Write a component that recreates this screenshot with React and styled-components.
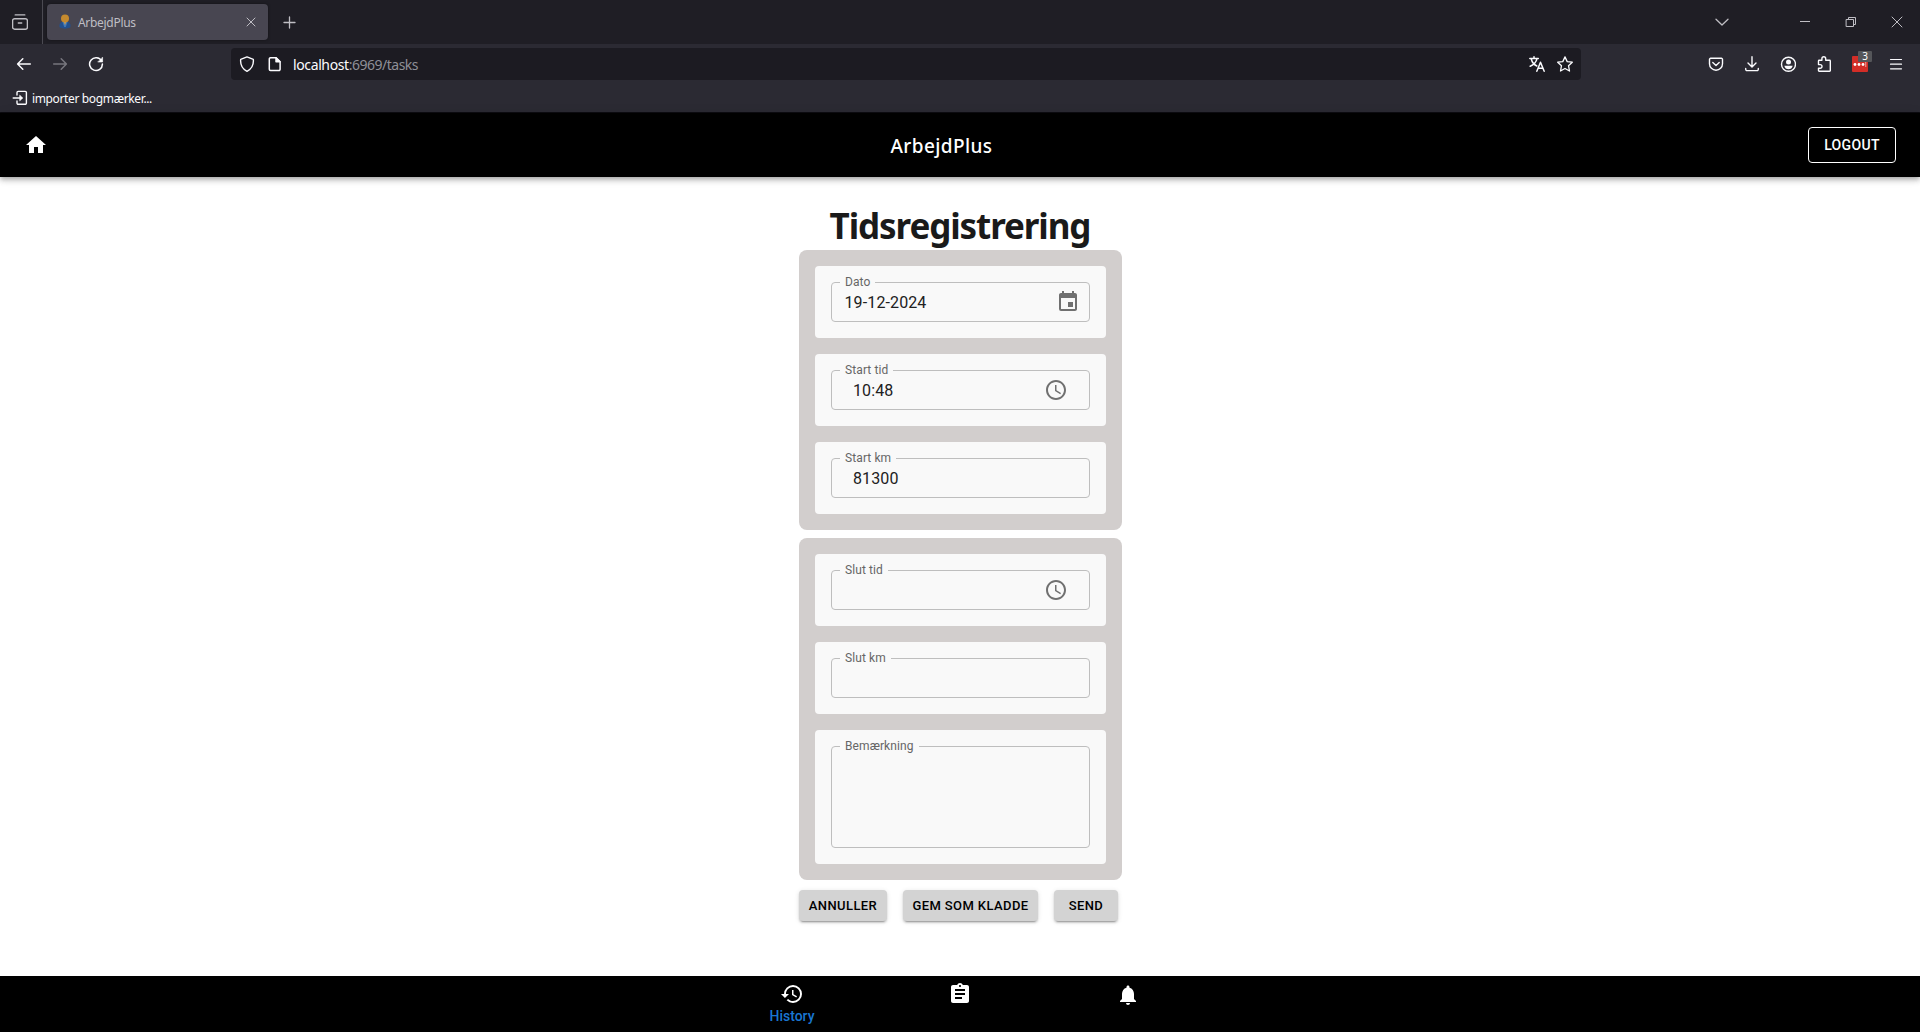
import React from "react";
import styled, { createGlobalStyle } from "styled-components";
import {
  MdHome,
  MdRestore,
  MdAssignment,
  MdNotifications,
  MdEvent,
  MdAccessTime,
} from "react-icons/md";

const GlobalStyle = createGlobalStyle`
  * { box-sizing: border-box; }
  body { margin: 0; background: #fff; font-family: Roboto, "Liberation Sans", sans-serif; }
  svg { display: block; flex: none; }
`;

const Window = styled.div`
  display: flex;
  flex-direction: column;
  height: 1032px;
  overflow: hidden;
`;

/* ---------- browser chrome ---------- */

const Chrome = styled.header`
  flex: none;
  height: 113px;
  background: #2b2a33;
  border-bottom: 1px solid #0e0d12;
  color: #fbfbfe;
  font-family: "Noto Sans", "Open Sans", sans-serif;
`;

const TabStrip = styled.div`
  display: flex;
  align-items: center;
  height: 44px;
  background: #1f1e25;
  color: #bfbec4;
`;

const RecentView = styled.div`
  display: flex;
  align-items: center;
  width: 43px;
  height: 44px;
  padding-left: 12px;
  border-right: 1px solid #4b4a52;
`;

const Tab = styled.div`
  display: flex;
  align-items: center;
  width: 221px;
  height: 36px;
  margin: 0 14px 0 4px;
  padding: 0 9px 0 10px;
  border-radius: 4px;
  background: #484651;
  box-shadow: 0 0 3px rgba(0, 0, 0, 0.4);
  font-size: 12px;
  letter-spacing: -0.3px;
`;

const TabTitle = styled.span`
  flex: 1;
  margin-left: 5px;
  line-height: 16px;
  padding-top: 2px;
`;

const WindowControls = styled.div`
  display: flex;
  align-items: center;
  margin-left: auto;
  padding-right: 15px;
  gap: 30px;
`;

const TabList = styled.div`
  margin-right: 37px;
`;

const NavBar = styled.div`
  display: flex;
  align-items: center;
  height: 40px;
  padding: 0 16px;
`;

const NavGroup = styled.div`
  display: flex;
  align-items: center;
  gap: 20px;
  width: 215px;
`;

const UrlBar = styled.div`
  display: flex;
  align-items: center;
  width: 1350px;
  height: 32px;
  padding: 0 8px;
  border-radius: 4px;
  background: #1c1b22;
`;

const UrlIcon = styled.span`
  margin-right: ${(p) => p.$gap}px;
`;

const Url = styled.span`
  flex: 1;
  font-size: 14px;
  letter-spacing: -0.38px;
  line-height: 20px;
  padding-top: 2px;
  color: #fbfbfe;
`;

const UrlPath = styled.span`
  color: #8f8f97;
  letter-spacing: -0.5px;
`;

const Actions = styled.div`
  display: flex;
  align-items: center;
  gap: 20px;
  margin-left: auto;
`;

const Extension = styled.div`
  position: relative;
  display: flex;
  align-items: center;
  justify-content: center;
  gap: 1px;
  width: 16px;
  height: 16px;
  border-radius: 1px;
  background: #d32d27;
`;

const ExtensionBadge = styled.span`
  position: absolute;
  top: -5px;
  left: 6px;
  width: 14px;
  height: 11px;
  border-radius: 1px;
  background: #55565a;
  color: #fff;
  font-size: 10px;
  line-height: 11px;
  text-align: center;
`;

const Bookmarks = styled.div`
  display: flex;
  align-items: center;
  gap: 4px;
  height: 28px;
  padding: 0 0 0 12px;
  font-size: 12px;
  letter-spacing: -0.36px;
`;

const BookmarkLabel = styled.span`
  padding-top: 1px;
`;

/* ---------- application ---------- */

const AppBar = styled.div`
  position: relative;
  flex: none;
  display: flex;
  align-items: center;
  height: 64px;
  padding: 0 24px;
  background: #000;
  color: #fff;
  box-shadow: 0 2px 4px -1px rgba(0, 0, 0, 0.2), 0 4px 5px rgba(0, 0, 0, 0.14),
    0 1px 10px rgba(0, 0, 0, 0.12);
`;

const Brand = styled.span`
  flex: 1;
  text-align: center;
  font-family: "Noto Sans", "Open Sans", sans-serif;
  font-size: 19px;
  font-weight: 500;
  letter-spacing: 0.4px;
  line-height: 32px;
  padding: 2px 0 0 27px;
`;

const LogoutButton = styled.button`
  width: 88px;
  height: 36px;
  padding: 0;
  border: 1px solid #fff;
  border-radius: 4px;
  background: transparent;
  color: #fff;
  font: 500 14px/24px Roboto, sans-serif;
  letter-spacing: 0.35px;
`;

const Main = styled.main`
  flex: 1;
  display: flex;
  flex-direction: column;
  width: 323px;
  margin-left: 799px;
`;

const Title = styled.h1`
  align-self: center;
  margin: 25px 0 0 -1px;
  height: 48px;
  font: 700 35px/48px "Noto Sans", "Open Sans", sans-serif;
  letter-spacing: -1.1px;
  white-space: nowrap;
  color: #1a1a1a;
`;

const Group = styled.section`
  display: flex;
  flex-direction: column;
  gap: 16px;
  margin-bottom: 8px;
  padding: 16px;
  border-radius: 8px;
  background: #d2cecd;
`;

const Card = styled.div`
  padding: 16px;
  border-radius: 4px;
  background: #f9f9f9;
`;

const Fieldset = styled.fieldset`
  display: block;
  min-width: 0;
  height: ${(p) => (p.$tall ? 107 : 45)}px;
  margin: -5px 0 0;
  padding: 0 8px;
  border: 1px solid #bebebe;
  border-radius: 4px;
`;

const Legend = styled.legend`
  height: 11px;
  padding: 0 5px;
  color: #666;
  font-size: 12px;
  line-height: 10px;
  letter-spacing: 0.1px;
`;

const FieldBody = styled.div`
  display: flex;
  align-items: center;
  justify-content: space-between;
  height: 28px;
  padding: 0 ${(p) => (p.$inset ? "13px" : "1px")} 0 ${(p) => (p.$inset ? "13px" : "4.500px")};
  color: #212121;
  font-size: 16px;
  letter-spacing: 0.12px;
`;

const FieldIcon = styled.span`
  color: #707070;
  font-size: 24px;
`;

const ButtonRow = styled.div`
  display: flex;
  gap: 16px;
  padding-top: 2px;
`;

const ActionButton = styled.button`
  width: ${(p) => p.$width}px;
  height: 31px;
  padding: 0;
  border: 0;
  border-radius: 4px;
  background: #d3d3d3;
  color: #000;
  font: 500 13px/23px Roboto, sans-serif;
  letter-spacing: 0.4px;
  box-shadow: 0 3px 1px -2px rgba(0, 0, 0, 0.2), 0 2px 2px rgba(0, 0, 0, 0.14),
    0 1px 5px rgba(0, 0, 0, 0.12);
`;

const BottomNav = styled.nav`
  flex: none;
  display: flex;
  justify-content: center;
  height: 56px;
  background: #000;
`;

const NavItem = styled.div`
  display: flex;
  flex-direction: column;
  align-items: center;
  width: 168px;
  padding-top: ${(p) => p.$top || 6}px;
  color: #fff;
  font-size: 24px;
`;

const NavLabel = styled.span`
  color: #1976d2;
  font-size: 14px;
  font-weight: 500;
  line-height: 20px;
`;

/* ---------- drawings ---------- */

const Line = ({ size = 16, w = 1.3, color = "currentColor", children }) => (
  <svg
    width={size}
    height={size}
    viewBox="0 0 16 16"
    fill="none"
    stroke={color}
    strokeWidth={w}
    strokeLinecap="round"
    strokeLinejoin="round"
  >
    {children}
  </svg>
);

const Avatar = () => (
  <svg width="16" height="16" viewBox="0 0 16 16">
    <path d="M2.800 13.600C1.800 10.500 3 8.200 5.500 7.800h5c2.500.4 3.700 2.700 2.700 5.800-3 1.500-7.400 1.500-10.400 0z" fill="#24508c" />
    <path d="M5.500 8h5L8.800 13H7.200z" fill="#4179b8" />
    <circle cx="8" cy="4.500" r="4" fill="#c58a2e" />
    <path d="M7.200 8h1.600l-.4 2.500h-.8z" fill="#d7a04a" />
  </svg>
);

const FIELDS_START = [
  { label: "Dato", value: "19-12-2024", icon: <MdEvent /> },
  { label: "Start tid", value: "10:48", icon: <MdAccessTime />, inset: true },
  { label: "Start km", value: "81300", inset: true },
];

const FIELDS_END = [
  { label: "Slut tid", value: "", icon: <MdAccessTime />, inset: true },
  { label: "Slut km", value: "", inset: true },
  { label: "Bemærkning", value: "", tall: true },
];

const FieldGroup = ({ fields }) => (
  <Group>
    {fields.map((f) => (
      <Card key={f.label}>
        <Fieldset $tall={f.tall}>
          <Legend>{f.label}</Legend>
          <FieldBody $inset={f.inset}>
            <span>{f.value}</span>
            {f.icon && <FieldIcon>{f.icon}</FieldIcon>}
          </FieldBody>
        </Fieldset>
      </Card>
    ))}
  </Group>
);

const BrowserChrome = () => (
  <Chrome>
    <TabStrip>
      <RecentView>
        <Line w={1.4}>
          <path d="M3.200 .9h9.600M2.600 4.700h10.800a2 2 0 0 1 2 2v6.500a2 2 0 0 1-2 2H2.600a2 2 0 0 1-2-2V6.700a2 2 0 0 1 2-2zM6.300 9h3.400" />
        </Line>
      </RecentView>
      <Tab>
        <Avatar />
        <TabTitle>ArbejdPlus</TabTitle>
        <Line size={16} w={1}>
          <path d="M4 4l8 8M12 4l-8 8" />
        </Line>
      </Tab>
      <Line w={1.3}>
        <path d="M7.500 3v11M2 8.500h11" />
      </Line>
      <WindowControls>
        <TabList>
          <Line w={1.300}>
            <path d="M2 5.300l6 5.700 6-5.700" />
          </Line>
        </TabList>
        <Line w={1}>
          <path d="M3 7.500h10" strokeLinecap="butt" />
        </Line>
        <Line w={1}>
          <path d="M3.500 5.500h7v7h-7zM5.500 5.500v-2h7v7h-2" strokeLinejoin="miter" />
        </Line>
        <Line w={1}>
          <path d="M3 3l10 10M13 3L3 13" />
        </Line>
      </WindowControls>
    </TabStrip>
    <NavBar>
      <NavGroup>
        <Line w={1.500}>
          <path d="M14.300 8H1.800M6.800 2.800L1.600 8l5.200 5.200" />
        </Line>
        <Line w={1.500} color="#77767e">
          <path d="M1.700 8h12.500M9.200 2.800L14.400 8l-5.200 5.200" />
        </Line>
        <Line w={1.500}>
          <path d="M13.600 5A6.400 6.400 0 1 0 14.400 8" />
          <path d="M14.600 1.500v4.500h-4.500z" fill="currentColor" strokeWidth=".6" />
        </Line>
      </NavGroup>
      <UrlBar>
        <UrlIcon $gap={12}>
          <Line w={1.400}>
            <path d="M8 .9l6.300 2.400c.5 4.900-1.600 9.700-6.300 12-4.700-2.300-6.800-7.100-6.300-12z" />
          </Line>
        </UrlIcon>
        <UrlIcon $gap={10}>
          <Line w={1.500}>
            <path d="M3.500 1.700h5.600l4 4v7.600a1.200 1.200 0 0 1-1.200 1.200H3.500a1.200 1.200 0 0 1-1.200-1.200V2.900a1.200 1.200 0 0 1 1.200-1.200z" />
            <path d="M9 1.700v4h4z" fill="currentColor" />
          </Line>
        </UrlIcon>
        <Url>
          localhost<UrlPath>:6969/tasks</UrlPath>
        </Url>
        <UrlIcon $gap={12}>
          <Line w={1.500}>
            <path d="M.8 2.500h8.500M5 .8v1.700M2.200 2.700c.8 3.300 3 6 5.600 7.300M8 2.700C7.200 6.200 4.500 9 1.200 10.300M7.800 15.200l3.700-9 3.700 9M9 12.300h5" />
          </Line>
        </UrlIcon>
        <Line w={1.300}>
          <path d="M8 .9l2.200 4.700 5.100.6-3.800 3.500 1 5.300L8 12.500 3.500 15l1-5.300L.7 6.200l5.100-.6z" />
        </Line>
      </UrlBar>
      <Actions>
        <Line w={1.400}>
          <path d="M2.600 2.300h10.800a1.100 1.100 0 0 1 1.100 1.100v4.300a6.500 6.500 0 0 1-13 0V3.400a1.100 1.100 0 0 1 1.100-1.100zM4.800 6.600L8 9.600l3.200-3" />
        </Line>
        <Line w={1.400}>
          <path d="M8 .8v10M4 7l4 4 4-4M1.700 12.500v.8a1.300 1.300 0 0 0 1.300 1.300h10a1.300 1.300 0 0 0 1.300-1.300v-.8" />
        </Line>
        <Line w={1.400}>
          <circle cx="8.500" cy="8.300" r="7" />
          <circle cx="8.500" cy="6" r="2.500" fill="currentColor" stroke="none" />
          <path d="M4.300 9.700h8.400c-.5 2.400-2.200 3.600-4.200 3.600s-3.700-1.200-4.200-3.600z" fill="currentColor" stroke="none" />
        </Line>
        <Line w={1.400}>
          <path d="M3.200 4.200h2.700V2.700a1.900 1.900 0 0 1 3.800 0v1.500h3.900a.7.700 0 0 1 .7.700v9.600a.7.700 0 0 1-.7.700H3.200a.7.700 0 0 1-.7-.7v-2.300h1.700a1.800 1.800 0 0 0 0-3.600H2.500V4.900a.7.700 0 0 1 .7-.7z" />
        </Line>
        <Extension>
          <svg width="14" height="5" viewBox="0 0 14 5" fill="#fff">
            <circle cx="2" cy="2.500" r="1.400" />
            <circle cx="6" cy="2.500" r="1.400" />
            <circle cx="10" cy="2.500" r="1.400" />
            <path d="M12.400 0h.8v5h-.8z" opacity=".7" />
          </svg>
          <ExtensionBadge>3</ExtensionBadge>
        </Extension>
        <Line w={1.200}>
          <path d="M2.500 3.500h11M2.500 8.200h11M2.500 12.800h11" />
        </Line>
      </Actions>
    </NavBar>
    <Bookmarks>
      <Line w={1.400}>
        <path d="M5 5V2.600a1.200 1.200 0 0 1 1.200-1.200h7a1.200 1.200 0 0 1 1.200 1.200v10.500a1.200 1.200 0 0 1-1.200 1.200h-7A1.200 1.200 0 0 1 5 13.100V11M1.200 8h8.600" />
        <path d="M8 5.500l2.600 2.500L8 10.500z" fill="currentColor" strokeWidth=".8" />
      </Line>
      <BookmarkLabel>importer bogmærker...</BookmarkLabel>
    </Bookmarks>
  </Chrome>
);

export default function App() {
  return (
    <Window>
      <GlobalStyle />
      <BrowserChrome />
      <AppBar>
        <MdHome size={24} />
        <Brand>ArbejdPlus</Brand>
        <LogoutButton>LOGOUT</LogoutButton>
      </AppBar>
      <Main>
        <Title>Tidsregistrering</Title>
        <FieldGroup fields={FIELDS_START} />
        <FieldGroup fields={FIELDS_END} />
        <ButtonRow>
          <ActionButton $width={88}>ANNULLER</ActionButton>
          <ActionButton $width={135}>GEM SOM KLADDE</ActionButton>
          <ActionButton $width={64}>SEND</ActionButton>
        </ButtonRow>
      </Main>
      <BottomNav>
        <NavItem>
          <MdRestore />
          <NavLabel>History</NavLabel>
        </NavItem>
        <NavItem>
          <MdAssignment />
        </NavItem>
        <NavItem $top={7}>
          <MdNotifications />
        </NavItem>
      </BottomNav>
    </Window>
  );
}
